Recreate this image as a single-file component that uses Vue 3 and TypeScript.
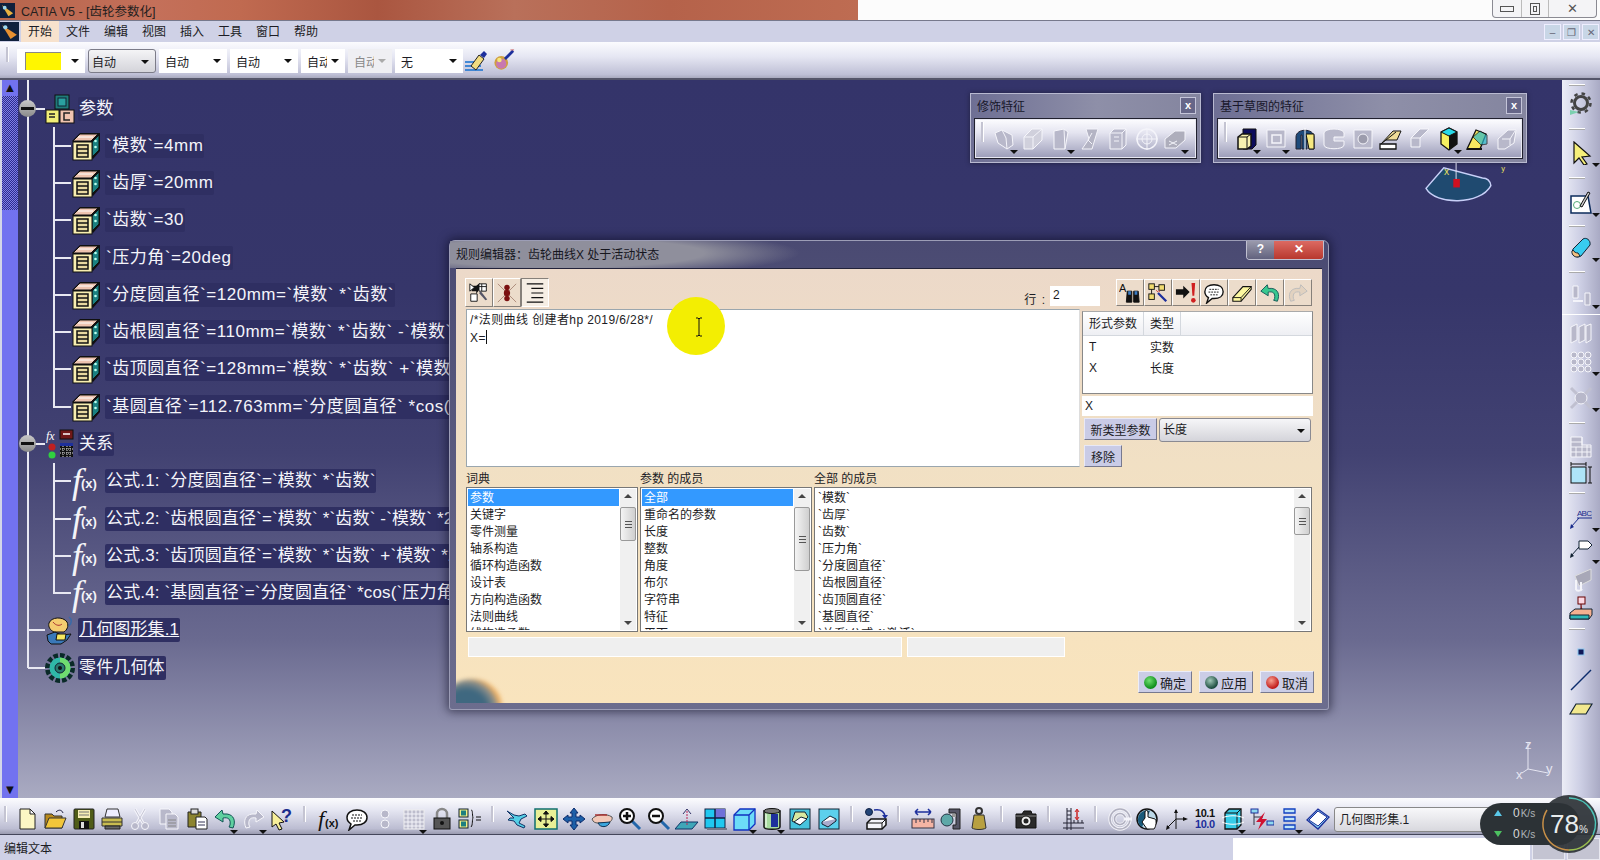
<script setup lang="ts">
const dis = 'fill="#b8b8ca" stroke="#f6f6fb"'
const disLine = 'fill="none" stroke="#f4f4fa"'

const icons: Record<string, string> = {
  new: '<path d="M5 2h10l5 5v15H5z" fill="#fcf7c4" stroke="#222"/><path d="M15 2v5h5z" fill="#fff" stroke="#222"/>',
  open: '<path d="M2 7h7l2 2h8v12H2z" fill="#b8891c" stroke="#333"/><path d="M6 11h17l-4 10H2z" fill="#f2c63a" stroke="#333"/><path d="M13 5c3-3 6-2 7 1" fill="none" stroke="#224"/>',
  save: '<rect x="2" y="2" width="20" height="20" rx="1" fill="#4f5c18" stroke="#222"/><rect x="6" y="3" width="12" height="8" fill="#f6eeb4"/><path d="M7 5h10M7 8h10" stroke="#777"/><rect x="7" y="14" width="10" height="8" fill="#111"/><rect x="9" y="15" width="3" height="6" fill="#ddd"/>',
  print: '<path d="M7 2h11l2 8H5z" fill="#eef" stroke="#333"/><path d="M2 11h20v8H2z" fill="#c8bc50" stroke="#333"/><path d="M2 15h20" stroke="#333"/><path d="M5 19h15v3H5z" fill="#666" stroke="#222"/>',
  cut: `<circle cx="7" cy="19" r="3.5" ${dis}/><circle cx="17" cy="19" r="3.5" ${dis}/><path d="M9 16 17 2M15 16 7 2" stroke="#f4f4fa" stroke-width="3"/><path d="M9 16 17 2M15 16 7 2" stroke="#c6c6d6"/>`,
  copy: `<path d="M3 2h9l3 3v12H3z" ${dis}/><path d="M9 7h9l3 3v12H9z" ${dis}/><path d="M11 13h8M11 16h8M11 19h8" stroke="#888"/>`,
  paste: '<path d="M3 5h13v15H3z" fill="#8c8430" stroke="#222"/><rect x="6" y="2" width="7" height="5" fill="#ddd" stroke="#222"/><path d="M11 10h9l2 2v10H11z" fill="#fff" stroke="#222"/><path d="M13 15h7M13 18h7" stroke="#335"/>',
  undo: '<path d="M9 3 2 10l8 5v-4c5-1 8 1 7 7l-1 2 4 1c3-7 1-13-6-14H10z" fill="#5fd0a0" stroke="#155"/>',
  redo: `<path d="M15 3l7 7-8 5v-4c-5-1-8 1-7 7l1 2-4 1C1 14 3 8 10 7h4z" ${dis}/>`,
  help: '<path d="M2 4 14 15l-5 1 3 6-3 1-3-6-4 3z" fill="#f7ef9a" stroke="#111"/><text x="11" y="15" font-size="18" font-weight="700" font-family="Liberation Sans" fill="#1a2c8c">?</text>',
  fx: '<text x="1" y="20" font-size="23" font-style="italic" font-family="Liberation Serif" fill="#111">f</text><text x="8" y="20" font-size="11" font-weight="700" font-family="Liberation Sans" fill="#111">(x)</text>',
  bubble: '<path d="M12 3c6 0 10 3 10 7.5S18 18 12 18l-2 0-6 5 2-6C3 15 2 13 2 10.500 2 6 6 3 12 3z" fill="#fff" stroke="#111" stroke-width="1.500"/><path d="M7 8h10M6 11h12M8 14h8" stroke="#111" stroke-dasharray="2 1"/>',
  link: `<circle cx="12" cy="7" r="4" ${dis}/><circle cx="12" cy="17" r="4" ${dis}/>`,
  table: '<rect x="2" y="3" width="20" height="19" fill="#bdbdcd" stroke="#eee"/><path d="M2 7h20M2 11h20M2 15h20M2 19h20M6 3v19M10 3v19M14 3v19M18 3v19" stroke="#f4f4fa"/>',
  lock: '<path d="M7 11V7a5 5 0 0 1 10 0v4" fill="none" stroke="#888" stroke-width="2.500"/><rect x="4" y="11" width="16" height="11" fill="#555" stroke="#111"/><circle cx="12" cy="16" r="2" fill="#111"/>',
  params: '<rect x="1" y="2" width="9" height="8" fill="#f2ee88" stroke="#123"/><rect x="3" y="3.500" width="5" height="5" fill="#1d7f7f"/><rect x="1" y="13" width="9" height="8" fill="#f2ee88" stroke="#123"/><rect x="3" y="14.500" width="5" height="5" fill="#1d7f7f"/><path d="M13 3c2 0 1 4 2 8-1 1 0 7-2 9" fill="none" stroke="#111"/><path d="M18 10h5M18 13h5" stroke="#111"/>',
  fly: '<path d="M2 4 9 8l5 1 6-2 2 2-6 3-2 4 6 3-1 2-7-3-3-4-6-1 2-2 4 0z" fill="#54cfe6" stroke="#136"/>',
  fit: '<rect x="1" y="2" width="22" height="20" fill="#e8ef96" stroke="#0f6f6f" stroke-width="1.500"/><path d="M12 4v16M4 12h16M12 4l-2.500 3h5zM12 20l-2.500-3h5zM4 12l3-2.500v5zM20 12l-3-2.500v5z" fill="#111" stroke="#111"/>',
  pan: '<path d="M12 1l4 5h-2v4h4V8l5 4-5 4v-2h-4v4h2l-4 5-4-5h2v-4H6v2l-5-4 5-4v2h4V6H8z" fill="#1c5fa8" stroke="#0c2c6c"/>',
  rotate: '<path d="M2 12c4-5 14-6 20-2 1 3-2 6-6 6H8c-3 0-5-1-6-4z" fill="#f2c8b8" stroke="#555"/><path d="M8 16c2 5 10 5 12-1z" fill="#3ba6dd" stroke="#135"/><path d="M5 8h12" stroke="#a33" stroke-width="1.500"/>',
  zoomin: '<path d="M14 14l8 8" stroke="#26a" stroke-width="3"/><circle cx="9" cy="9" r="7" fill="#fff" stroke="#111" stroke-width="2"/><path d="M5 9h8M9 5v8" stroke="#111" stroke-width="2.500"/>',
  zoomout: '<path d="M14 14l8 8" stroke="#26a" stroke-width="3"/><circle cx="9" cy="9" r="7" fill="#fff" stroke="#111" stroke-width="2"/><path d="M5 9h8" stroke="#111" stroke-width="2.500"/>',
  normal: '<path d="M6 15h17l-6 7H0z" fill="#3fa6b8" stroke="#136"/><path d="M12 18V3" stroke="#b25" stroke-dasharray="2 1"/><path d="M8 7l4-5 4 5" fill="none" stroke="#336"/>',
  quad: '<rect x="2" y="2" width="20" height="19" fill="#20c8f0" stroke="#124"/><rect x="12" y="2" width="10" height="9" fill="#7070d8"/><path d="M12 2v19M2 11h20" stroke="#124" stroke-width="1.500"/><path d="M4 21h20v2H4z" fill="#778"/>',
  cube: '<path d="M2 8 8 2h15v15l-6 6H2z" fill="#6cdcf8" stroke="#1030c0" stroke-width="1.300"/><path d="M2 8h15v15M17 8l6-6" fill="none" stroke="#1030c0" stroke-width="1.300"/>',
  cyl: '<path d="M4 4v16c0 3 16 3 16 0V4z" fill="#a8dca0" stroke="#111" stroke-width="1.500"/><ellipse cx="12" cy="4" rx="8" ry="2.500" fill="#777" stroke="#111"/><rect x="11" y="7" width="7" height="13" fill="#1d2f9c"/><path d="M6 7v13" stroke="#fff"/>',
  hide: '<rect x="2" y="2" width="20" height="20" fill="#48c4de" stroke="#123"/><path d="M7 5h10l3 5-8 8-8-4z" fill="#d8e8a0" stroke="#123"/><path d="M6 15l7-5 6 2-7 6z" fill="#fff" stroke="#123"/>',
  swap: '<rect x="2" y="2" width="20" height="20" fill="#5cd0ec" stroke="#123"/><path d="M5 15l8-6 6 3-8 6z" fill="#fff" stroke="#123"/><path d="M5 15v2l6 3 8-6v-2" fill="#aac" stroke="#123"/>',
  move: '<circle cx="5" cy="5" r="3.500" fill="#247" stroke="#124"/><path d="M10 3c6-1 10 1 11 6" fill="none" stroke="#1d2f9c" stroke-width="1.500"/><path d="M18 8h6l-3 4z" fill="#1d2f9c"/><path d="M3 16l4-4h15v6l-4 4H3z" fill="#f4f4fa" stroke="#111" stroke-width="1.500"/><path d="M3 16h15v6M18 16l4-4" fill="none" stroke="#111"/>',
  ruler: '<path d="M4 5h16M4 5l3-3M4 5l3 3M20 5l-3-3M20 5l-3 3" fill="none" stroke="#1d2f9c" stroke-width="1.500"/><rect x="1" y="12" width="22" height="9" fill="#f4b4a4" stroke="#334"/><path d="M5 12v4M9 12v3M13 12v4M17 12v3M21 12v4" stroke="#334"/>',
  clamp: '<path d="M10 2h11v20h-7v-4h3V6h-7z" fill="#556" stroke="#222"/><path d="M13 7h4v3h-4z" fill="#999"/><circle cx="8" cy="13" r="6" fill="#5ea8a8" stroke="#234"/>',
  weight: '<circle cx="12" cy="4" r="3" fill="none" stroke="#333" stroke-width="2"/><path d="M7 8h10l2 13c-3 2-11 2-14 0z" fill="#b8a040" stroke="#333"/>',
  camera: '<path d="M2 7h6l2-3h7l1 3h4v14H2z" fill="#2a2a2a" stroke="#111"/><path d="M2 9h20" stroke="#888"/><circle cx="12" cy="14" r="5" fill="#eee" stroke="#111"/><circle cx="12" cy="14" r="2.500" fill="#222"/>',
  analysis: '<path d="M6 1v22M10 1v22M2 16h21M2 21h21" stroke="#223" fill="none"/><path d="M6 4h4M6 8h4M6 12h4M13 16v-3M17 16v-3M21 16v-3" stroke="#223"/><path d="M16 3v9" stroke="#c22" stroke-width="1.500"/><path d="M14 5l2-3 2 3M14 10l2 3 2-3" fill="none" stroke="#c22"/>',
  spiral: '<circle cx="12" cy="12" r="10" fill="none" stroke="#f0f0f6" stroke-width="3.500"/><circle cx="12" cy="12" r="10" fill="none" stroke="#b0b0c0" stroke-width="1.500"/><circle cx="12" cy="12" r="5.500" fill="none" stroke="#f0f0f6" stroke-width="3.500"/><circle cx="12" cy="12" r="5.500" fill="none" stroke="#b0b0c0" stroke-width="1.500"/><path d="M16 12h8" stroke="#f4f4fa" stroke-width="3"/>',
  hand: '<circle cx="11" cy="12" r="10" fill="#bcd8e8" stroke="#111" stroke-width="1.500"/><path d="M2 12a9 9 0 0 1 12-8l-4 8-4 8a9 9 0 0 1-4-8z" fill="#1a5a7a"/><path d="M9 11V5a1.500 1.500 0 0 1 3 0v5l7 2c2 1 1 8-1 10h-7l-5-7z" fill="#fff" stroke="#111"/>',
  axes: '<path d="M11 22V12l10 0" fill="none" stroke="#111"/><path d="M11 12V3M11 12 2 21M21 12" stroke="#111"/><path d="M9 6l2-4 2 4zM18 10l5 2-5 2zM1 23l1-5 3 3z" fill="#111"/>',
  num: '<text x="2" y="10" font-size="11" font-weight="700" font-family="Liberation Sans" fill="#111" textLength="20">10.1</text><text x="2" y="21" font-size="11" font-weight="700" font-family="Liberation Sans" fill="#1d2f9c" textLength="20">10.0</text>',
  cuberot: '<path d="M4 6 8 2h12v16l-4 4H4z" fill="#38cce8" stroke="#111" stroke-width="1.300"/><path d="M4 6h12v16M16 6l4-4" fill="none" stroke="#111"/><path d="M1 11c6-3 16-3 22 0M1 15c6 3 16 3 22 0" fill="none" stroke="#fff"/>',
  bolt: '<rect x="1" y="2" width="7" height="4" fill="#8fd8f0" stroke="#1d2f9c"/><path d="M4 6v12M4 10h9" stroke="#334"/><rect x="17" y="14" width="7" height="4" fill="#8fd8f0" stroke="#1d2f9c"/><path d="M15 5 6 15h5l-3 8 9-11h-5z" fill="#d01030"/>',
  tree: '<path d="M6 2h11v4H6zM6 10h11v4H6zM6 18h11v4H6z" fill="#bfe4f8" stroke="#1040c0" stroke-width="1.300"/>',
  book: '<path d="M1 13 12 2l11 8-11 12z" fill="#8cd4f0" stroke="#1d2f9c" stroke-width="1.300"/><path d="M3 13 12 4l9 6-9 9z" fill="#fff" stroke="#1d2f9c"/>',
  gear: '<circle cx="12" cy="11" r="6.500" fill="none" stroke="#444" stroke-width="3"/><circle cx="12" cy="11" r="9.500" fill="none" stroke="#444" stroke-width="2.500" stroke-dasharray="3.500 4"/><path d="M1 18v5l9-3z" fill="#7cd0b0"/>',
  arrow: '<path d="M5 1 21 15l-8 1 5 7-3 1-5-7-5 5z" fill="#f6f07a" stroke="#111" stroke-width="1.200"/>',
  sketch: '<path d="M2 5h17l3 17H2z" fill="#fff" stroke="#0c2c5c" stroke-width="1.500"/><circle cx="8" cy="14" r="3.500" fill="none" stroke="#5a7"/><path d="M11 15 19 1l2 1-8 14z" fill="#ccc" stroke="#111"/>',
  pad: '<path d="M4 13 14 3c3-2 8 1 7 6L12 20c-5 3-10-2-8-7z" fill="#38ccf0" stroke="#123"/><path d="M3 15c-1 4 4 8 8 5l-2-3c-2 0-4-1-5-3z" fill="#f4c080" stroke="#123"/>',
  dim1: `<path d="M4 3h5v12H4zM16 10h5v12h-5z" ${dis}/><path d="M4 18h10" stroke="#f4f4fa" stroke-width="2"/>`,
  dim2: `<path d="M2 6l6-3v16l-6 3zM10 6l6-3v16l-6 3zM17 5l5-2v16l-5 3z" ${dis}/>`,
  dim3: `<g ${dis}><circle cx="5" cy="5" r="3"/><circle cx="12" cy="5" r="3"/><circle cx="19" cy="5" r="3"/><circle cx="5" cy="12" r="3"/><circle cx="12" cy="12" r="3"/><circle cx="19" cy="12" r="3"/><circle cx="5" cy="19" r="3"/><circle cx="12" cy="19" r="3"/><circle cx="19" cy="19" r="3"/></g>`,
  dim4: `<circle cx="12" cy="12" r="6" ${dis}/><path d="M2 2l6 6M22 2l-6 6M2 22l6-6M22 22l-6-6" stroke="#c0c0d0" stroke-width="3"/>`,
  dim5: `<path d="M2 2v20h20V10h-9V2z" ${dis}/><path d="M2 7h11M2 12h20M2 17h20M7 12v10M13 2v20M18 10v12" stroke="#f4f4fa"/>`,
  frame: '<rect x="2" y="6" width="15" height="16" fill="#aee4f8" stroke="#111"/><path d="M2 1v4M17 1v4M2 3h15M21 6v16M19 6h4M19 22h4" stroke="#111"/>',
  abc: '<text x="8" y="10" font-size="8" font-family="Liberation Sans" fill="#1a2c8c" textLength="15">ABC</text><path d="M8 12h15M10 12l-8 9" stroke="#1a2c8c"/><path d="M1 23l1-5 3 3z" fill="#1a2c8c"/>',
  tag: '<path d="M10 4h9l4 4-4 4h-9z" fill="#fff" stroke="#123"/><path d="M10 10l-8 9" stroke="#123"/><path d="M1 21l1-5 3 3z" fill="#123"/>',
  flag: `<path d="M6 8l16-7v11L10 18z" fill="#a8a8b8" stroke="#ddd"/><path d="M7 12v10M12 14v8" stroke="#f4f4fa" stroke-width="2"/><path d="M7 22c2 1 5 1 6-1" ${disLine} stroke-width="2"/>`,
  stamp: '<rect x="9" y="1" width="7" height="7" fill="#fcd8e4" stroke="#600"/><path d="M12 8v5l-5 3h11l-5-3" fill="#b02020" stroke="#600"/><path d="M1 17 6 13h17v6l-3 4H1z" fill="#f4b090" stroke="#123"/><path d="M1 19h19v4H1z" fill="#2fb8b8" stroke="#123"/>',
  point: '<rect x="9" y="9" width="6" height="6" fill="#101858" stroke="#8cc8f0"/>',
  line: '<path d="M2 22 22 2" stroke="#0c2c6c" stroke-width="1.500"/>',
  plane: '<path d="M7 7h16l-6 10H1z" fill="#f2e88e" stroke="#123" stroke-width="1.200"/>',
  brush: '<path d="M1 13h14M1 17h16M1 21h18" stroke="#1470d0" stroke-width="1.500"/><path d="M7 17 15 6l5 4-8 11z" fill="#f2dc80" stroke="#222"/><path d="M16 6l4-4 3 3-3 4z" fill="#1d2f9c"/>',
  ball: '<circle cx="9" cy="15" r="7.500" fill="#d0a040"/><circle cx="9" cy="16" r="5.500" fill="#c878b0"/><circle cx="7" cy="12" r="2.500" fill="#f6e87a"/><path d="M13 11 22 2" stroke="#1d2f9c" stroke-width="3"/><path d="M19 1l4 0" stroke="#c66"/>',
  fillet: `<path d="M3 6l7-3 10 5 1 10-6 4-9-6z" ${dis}/><path d="M10 3l4 8 1 11" ${disLine}/>`,
  chamfer: `<path d="M3 10l8-8h10v11l-9 9H3z" fill="#d0d0dc" stroke="#f6f6fb"/><path d="M3 10h9v12M12 10l9-8" ${disLine}/>`,
  draft: `<path d="M5 4l10-2 4 3-3 17H5z" ${dis}/><path d="M15 2l1 20" ${disLine}/>`,
  shell: `<path d="M8 2h12l-6 20H4l7-10z" fill="#b4b4c4" stroke="#f4f4fa"/><path d="M14 6l-4 7 4 4" ${disLine}/>`,
  thick: `<path d="M4 6 8 2h12v16l-4 4H4z" ${dis}/><path d="M4 6h12v16M16 6l4-4M8 10h5M8 14h5" ${disLine}/>`,
  thread: `<circle cx="12" cy="12" r="10" ${disLine} stroke-width="1.500"/><circle cx="12" cy="12" r="5" ${disLine}/><path d="M12 1v22M1 12h22" ${disLine}/>`,
  remove: `<path d="M2 12 12 4h10v9l-9 8H2z" fill="#aeaebc" stroke="#f4f4fa"/><path d="M6 14l8 4M14 14l-8 4" ${disLine}/>`,
  padS: '<path d="M8 2h13v16l-4 4H8z" fill="#0c0c5c" stroke="#111"/><path d="M3 10l4-3h9v12l-4 3H3z" fill="#f6f0b0" stroke="#111" stroke-width="1.500"/><path d="M3 10h9v12M12 10l4-3" fill="none" stroke="#111"/>',
  pocket: `<path d="M3 3h18v17H3z" ${dis}/><path d="M8 8h9v8H8z" ${disLine} stroke-width="1.500"/>`,
  shaft: '<path d="M3 10c0-9 18-9 18 0v12h-5V8h-2v14H9V8H8v14H3z" fill="#1d4a7a" stroke="#223"/><path d="M13 7h8v15h-5z" fill="#f6e880" stroke="#111"/><path d="M12 1v22" stroke="#fff"/>',
  groove: `<ellipse cx="12" cy="6" rx="10" ry="4" ${dis}/><path d="M2 6v12c0 5 20 5 20 0v-4H12V10h10V6" ${dis}/>`,
  hole: `<path d="M3 3h18v18H3z" ${dis}/><circle cx="12" cy="12" r="5" fill="#9c9cac" stroke="#f4f4fa"/>`,
  rib: '<path d="M2 17 14 4h8l-4 9H7z" fill="#eedc98" stroke="#111"/><path d="M1 17h16v5H1z" fill="#fff" stroke="#111" stroke-width="1.300"/><path d="M7 13 17 5" stroke="#111"/>',
  slot: `<path d="M3 20V11l9-9h9L12 11v9zM3 11h9" ${dis}/>`,
  stiff: '<path d="M4 5 12 1l8 4v12l-8 6-8-6z" fill="#f6f060" stroke="#111" stroke-width="1.300"/><path d="M4 5l8 4 8-4-8-4z" fill="#28d8e8" stroke="#111"/><path d="M12 9v14l8-6V5z" fill="#111"/>',
  multi: '<path d="M1 22 10 3l10 4-6 15z" fill="#f6e860" stroke="#111" stroke-width="1.300"/><path d="M7 10l7-6 7 4v9l-6 1z" fill="#28b8c8" stroke="#111" opacity=".7"/><path d="M1 22h15" stroke="#111" stroke-width="2"/>',
  solid: `<path d="M3 12 13 3h8l-2 13-9 6H3z" ${dis}/><path d="M7 12h8v6M15 12l5-8" ${disLine}/>`,
  formula: '<path d="M4 4h5l4-3v3h2l-6 9v-3H4z" fill="#111"/><path d="M2 2l5 4-5 4zM3 13h7v8H3z" fill="#fff" stroke="#111"/><path d="M12 2h8v8h-8zM12 5h8M15 2v8" fill="#fff" stroke="#111"/><path d="M14 10l7 9-2 1-7-8z" fill="#556"/>',
  debug: '<path d="M2 2l20 20M22 2 2 22" stroke="#a87" /><circle cx="12" cy="6" r="3" fill="#7a1010"/><circle cx="12" cy="12" r="3.500" fill="#7a1010"/><circle cx="12" cy="18" r="3" fill="#7a1010"/>',
  indent: '<path d="M3 2h18M8 7h13M8 12h13M8 17h13M3 22h18" stroke="#111" stroke-width="1.300"/>',
  find: '<text x="0" y="11" font-size="12" font-family="Liberation Sans" fill="#111">A</text><path d="M9 10h5v12H8zM16 10h5l1 12h-6z" fill="#111" stroke="#111"/><path d="M10 10h3v4h-3zM17 10h3v4h-3z" fill="#3a7ac0"/>',
  wizard: '<rect x="2" y="2" width="6" height="6" fill="#f2dc70" stroke="#111"/><rect x="13" y="3" width="6" height="6" fill="#f2dc70" stroke="#111"/><rect x="2" y="13" width="6" height="6" fill="#f2dc70" stroke="#111"/><path d="M8 5h5M5 8v5" stroke="#111"/><path d="M12 12l9 9" stroke="#1d2f9c" stroke-width="2.500"/><path d="M10 9l2 2M14 9l-1 2" stroke="#c33"/>',
  errArrow: '<path d="M1 8h8V4l7 7-7 7v-4H1z" fill="#111"/><path d="M18 1h4l-1 14h-2z" fill="#d02020"/><circle cx="20" cy="20" r="2.500" fill="#d02020"/>',
  eraser: '<path d="M2 17 13 5h9v3L11 21H2z" fill="#fcf7a0" stroke="#111" stroke-width="1.200"/><path d="M2 17h9v4M11 17 22 5" fill="none" stroke="#111"/>',
  undoG: '<path d="M9 3 2 10l8 5v-4c5-1 8 1 7 7l-1 2 4 1c3-7 1-13-6-14H10z" fill="#38c890" stroke="#155"/>',
  redoD: `<path d="M15 3l7 7-8 5v-4c-5-1-8 1-7 7l1 2-4 1C1 14 3 8 10 7h4z" fill="#e2d2c0" stroke="#bbb"/>`
}

const treeIcons: Record<string, string> = {
  group: '<rect x="10" y="1" width="14" height="14" fill="#1f7a7a" stroke="#111"/><rect x="13" y="4" width="8" height="8" fill="#2aa0a0" stroke="#123"/><rect x="1" y="16" width="13" height="13" fill="#f2ee78" stroke="#111"/><path d="M4 20h6M4 23h6" stroke="#222" stroke-width="1.500"/><rect x="15" y="16" width="14" height="13" fill="#f0c4b0" stroke="#111"/><path d="M25 19h-6v7h6" fill="none" stroke="#222" stroke-width="1.500"/>',
  param: '<path d="M1 10 9 2h20v18l-7 8z" fill="#111"/><path d="M2 10 9 3h18l-7 7z" fill="#eec4b0" stroke="#111"/><path d="M7 6h15" stroke="#fff"/><path d="M21 11l7-7v15l-7 7z" fill="#1a8080" stroke="#111"/><circle cx="24.500" cy="10" r="1.300" fill="#bfe"/><circle cx="24.500" cy="16" r="1.300" fill="#bfe"/><rect x="2" y="11" width="19" height="18" fill="#f8eeb0" stroke="#111"/><rect x="6" y="14" width="11" height="12" fill="#e8d8a0" stroke="#111" stroke-width="1.500"/><path d="M6 18h11M6 22h11" stroke="#111" stroke-width="1.500"/>',
  rel: '<text x="1" y="11" font-size="12" font-style="italic" font-family="Liberation Serif" fill="#fff">fx</text><rect x="15" y="1" width="13" height="9" fill="#701818" stroke="#111"/><path d="M18 5h7" stroke="#fff" stroke-width="1.500"/><circle cx="7" cy="18" r="3.500" fill="#c02020"/><circle cx="7" cy="26" r="3.500" fill="#30d040"/><rect x="15" y="14" width="13" height="14" fill="#111"/><rect x="15" y="14" width="13" height="3" fill="#1d2f9c"/><path d="M18 17v11M22 17v11M25 17v11M15 20h13M15 24h13" stroke="#ddd" stroke-dasharray="1 1"/>',
  geom: '<path d="M4 8c2-6 14-7 18-1 2 4 0 8-3 10H9C5 15 3 12 4 8z" fill="#f4cc70" stroke="#111"/><path d="M8 7c3 4 7 4 9 2" fill="none" stroke="#a33"/><path d="M24 2c3 2 3 6 0 9" fill="none" stroke="#3a6aa8" stroke-width="1.500"/><path d="M2 20l8-3 6 3 10-1-4 6-6 4H6l-3-3z" fill="#3a78b8" stroke="#111"/><path d="M12 19h9l-1 6h-9z" fill="#f6e860" stroke="#111"/>',
  body: '<circle cx="15" cy="15" r="12.500" fill="none" stroke="#0a2a28" stroke-width="5" stroke-dasharray="4.500 2"/><circle cx="15" cy="15" r="10.500" fill="#2fb8a8"/><path d="M15 4.500a10.500 10.500 0 0 1 0 21z" fill="#70dc70"/><circle cx="15" cy="15" r="5" fill="#2a7a70" stroke="#123"/><circle cx="15" cy="15" r="2" fill="#111"/>'
}

interface Tool {
  name: string
  drop: boolean
  grip: boolean
}

function parseTools(list: string): Tool[] {
  return list.split(' ').map((t) => ({
    name: t.replace('+', ''),
    drop: t.endsWith('+'),
    grip: t === '|'
  }))
}

const bottomTools = parseTools(
  '| new open save print cut copy paste undo+ redo+ help | fx bubble link table+ lock params | fly fit pan rotate zoomin zoomout normal quad cube+ cyl+ hide swap | move | ruler clamp weight | camera | analysis | spiral hand axes num cuberot+ bolt tree+ book'
)
const decorTools = parseTools('fillet+ chamfer draft+ shell thick thread remove+')
const sketchTools = parseTools('padS+ pocket+ shaft groove hole rib slot stiff+ multi solid')
const dialogLeft = ['formula', 'debug', 'indent']
const dialogRight = ['find', 'wizard', 'errArrow', 'bubble', 'eraser', 'undoG', 'redoD']

// item height keeps each icon on the same row as the reference strip
const sideTools = [
  { name: '|', h: 9 }, { name: 'gear', h: 30 }, { name: '|', h: 19 }, { name: 'arrow', h: 30, drop: true },
  { name: '|', h: 20 }, { name: 'sketch', h: 30, drop: true }, { name: '|', h: 15 }, { name: 'pad', h: 30, drop: true },
  { name: '|', h: 17 }, { name: 'dim1', h: 30, drop: true }, { name: 'sep', h: 8 }, { name: 'dim2', h: 29 },
  { name: 'dim3', h: 30, drop: true }, { name: 'gap', h: 6 }, { name: 'dim4', h: 30, drop: true }, { name: '|', h: 19 },
  { name: 'dim5', h: 30 }, { name: 'frame', h: 22 }, { name: '|', h: 18 }, { name: 'abc', h: 31, drop: true },
  { name: 'tag', h: 32, drop: true }, { name: 'flag', h: 30 }, { name: 'stamp', h: 26 }, { name: '|', h: 16 },
  { name: 'point', h: 30 }, { name: 'line', h: 26 }, { name: 'plane', h: 32 }
]

const menus = ['开始', '文件', '编辑', '视图', '插入', '工具', '窗口', '帮助']
const combos = [
  { cls: 'w68', swatch: true, text: '' },
  { cls: 'w68 raised', text: '自动' },
  { cls: 'w68', text: '自动' },
  { cls: 'w68', text: '自动' },
  { cls: 'w44', text: '自动' },
  { cls: 'w44 off', text: '自动' },
  { cls: 'w68', text: '无' }
]

const treeRows = [
  { icon: 'group', text: '参数', top: true, plus: true },
  { icon: 'param', text: '`模数`=4mm' },
  { icon: 'param', text: '`齿厚`=20mm' },
  { icon: 'param', text: '`齿数`=30' },
  { icon: 'param', text: '`压力角`=20deg' },
  { icon: 'param', text: '`分度圆直径`=120mm=`模数` *`齿数`' },
  { icon: 'param', text: '`齿根圆直径`=110mm=`模数` *`齿数` -`模数` *2.5' },
  { icon: 'param', text: '`齿顶圆直径`=128mm=`模数` *`齿数` +`模数` *2' },
  { icon: 'param', text: '`基圆直径`=112.763mm=`分度圆直径` *cos(`压力角`)', last: true },
  { icon: 'rel', text: '关系', top: true, plus: true },
  { icon: 'fx', text: '公式.1: `分度圆直径`=`模数` *`齿数`' },
  { icon: 'fx', text: '公式.2: `齿根圆直径`=`模数` *`齿数` -`模数` *2.5' },
  { icon: 'fx', text: '公式.3: `齿顶圆直径`=`模数` *`齿数` +`模数` *2' },
  { icon: 'fx', text: '公式.4: `基圆直径`=`分度圆直径` *cos(`压力角`)', last: true },
  { icon: 'geom', text: '几何图形集.1', top: true, active: true },
  { icon: 'body', text: '零件几何体', top: true, end: true }
]

const lists = [
  { title: '词典', thumb: 34, rows: ['参数', '关键字', '零件测量', '轴系构造', '循环构造函数', '设计表', '方向构造函数', '法则曲线', '线构造函数'], pick: true },
  { title: '参数 的成员', thumb: 64, rows: ['全部', '重命名的参数', '长度', '整数', '角度', '布尔', '字符串', '特征', '平面'], pick: true },
  { title: '全部 的成员', thumb: 28, rows: ['`模数`', '`齿厚`', '`齿数`', '`压力角`', '`分度圆直径`', '`齿根圆直径`', '`齿顶圆直径`', '`基圆直径`', '`关系\\公式.1\\激活`'], pick: false }
]

const actions = [
  { text: '确定', dot: 'green' },
  { text: '应用', dot: 'teal' },
  { text: '取消', dot: 'red' }
]
</script>

<template>
  <div class="app">
    <header class="titlebar">
      <div class="title-glow">
        <svg class="app-logo" viewBox="0 0 16 16"><rect width="16" height="16" fill="#10203c" /><path d="M2 2 14 11 9 14z" fill="#e8b040" /><circle cx="5" cy="5" r="2" fill="#9cd8f0" /></svg>
        <span>CATIA V5 - [齿轮参数化]</span>
      </div>
      <div class="win-btns">
        <span class="win-btn min"><i></i></span>
        <span class="win-btn max"><i></i></span>
        <span class="win-btn close">✕</span>
      </div>
    </header>

    <nav class="menubar">
      <svg class="menu-logo" viewBox="0 0 18 18"><rect width="18" height="18" fill="#10203c" /><path d="M2 3 16 12 10 16z" fill="#e89030" /><circle cx="5" cy="5" r="2" fill="#9cd8f0" /></svg>
      <span v-for="(m, i) in menus" :key="m" class="menu-item" :class="{ on: i === 0 }">{{ m }}</span>
      <div class="mdi-btns">
        <span>–</span>
        <span>❐</span>
        <span>✕</span>
      </div>
    </nav>

    <div class="format-bar">
      <i class="grip-v"></i>
      <div v-for="(c, i) in combos" :key="i" class="combo" :class="c.cls">
        <i v-if="c.swatch" class="swatch"></i>
        <span v-else class="combo-text">{{ c.text }}</span>
        <i class="caret"></i>
      </div>
      <svg class="fmt-icon" viewBox="0 0 24 24" v-html="icons.brush"></svg>
      <svg class="fmt-icon ball" viewBox="0 0 24 24" v-html="icons.ball"></svg>
    </div>

    <main class="main">
      <aside class="tree-scroll">
        <span class="scroll-btn">▲</span>
        <i class="scroll-hatch"></i>
        <i class="scroll-fill"></i>
        <span class="scroll-btn">▼</span>
      </aside>

      <section class="canvas">
        <div class="tree">
          <div v-for="row in treeRows" :key="row.text" class="row" :class="{ top: row.top, end: row.end }">
            <i v-if="row.plus" class="collapse"></i>
            <i v-if="!row.top" class="link" :class="{ last: row.last }"></i>
            <i v-if="row.top" class="stub"></i>
            <svg v-if="row.icon !== 'fx'" class="tree-icon" viewBox="0 0 30 30" v-html="treeIcons[row.icon]"></svg>
            <span v-else class="fx-icon"><b>f</b><em>(x)</em></span>
            <span class="label" :class="{ active: row.active, spaced: row.icon === 'param' }">{{ row.text }}</span>
          </div>
        </div>
      </section>

      <aside class="side-tools">
        <template v-for="(t, i) in sideTools" :key="i">
          <div class="side-slot" :style="{ height: t.h + 'px' }">
            <i v-if="t.name === '|'" class="grip-h"></i>
            <i v-else-if="t.name === 'sep'" class="side-sep"></i>
            <template v-else-if="t.name !== 'gap'">
              <svg class="side-icon" viewBox="0 0 24 24" v-html="icons[t.name]"></svg>
              <i v-if="t.drop" class="mini-caret"></i>
            </template>
          </div>
        </template>
      </aside>
    </main>

    <div class="bottom-bar">
      <template v-for="(t, i) in bottomTools" :key="i">
        <i v-if="t.grip" class="grip-slot"></i>
        <div v-else class="tool">
          <svg viewBox="0 0 24 24" v-html="icons[t.name]"></svg>
          <i v-if="t.drop" class="mini-caret"></i>
        </div>
      </template>
      <div class="scope-box">几何图形集.1</div>
    </div>

    <footer class="statusbar">
      <span>编辑文本</span>
      <div class="status-right">
        <div class="cmd-box"></div>
        <i class="tray"></i>
        <i class="tray"></i>
      </div>
    </footer>

    <!-- floating windows -->
    <div class="floater decor">
      <div class="floater-title"><span>修饰特征</span><b>x</b></div>
      <div class="floater-body">
        <i class="grip-v small"></i>
        <div v-for="t in decorTools" :key="t.name" class="tool">
          <svg viewBox="0 0 24 24" v-html="icons[t.name]"></svg>
          <i v-if="t.drop" class="mini-caret"></i>
        </div>
      </div>
    </div>

    <div class="floater sketchbased">
      <div class="floater-title"><span>基于草图的特征</span><b>x</b></div>
      <div class="floater-body">
        <i class="grip-v small"></i>
        <div v-for="t in sketchTools" :key="t.name" class="tool">
          <svg viewBox="0 0 24 24" v-html="icons[t.name]"></svg>
          <i v-if="t.drop" class="mini-caret"></i>
        </div>
      </div>
    </div>

    <svg class="compass" viewBox="0 0 96 50">
      <path d="M25 5 6 27c10 18 58 18 69-3-1-6-5-8-9-8z" fill="#1f4a70" stroke="#c8d0f8" stroke-width="1.500" />
      <path d="M38 0v20" stroke="#e4e4f4" />
      <rect x="35" y="17" width="7" height="9" fill="#d01020" />
      <text x="25" y="13" font-size="11" fill="#e8e060" font-family="Liberation Sans">x</text>
      <text x="86" y="8" font-size="8" fill="#e8e060" font-family="Liberation Sans">y</text>
    </svg>

    <svg class="axis" viewBox="0 0 44 44">
      <path d="M13 32V6M13 32l20 4M13 32l-6 4" fill="none" stroke="#e6e6f2" />
      <text x="10" y="12" font-size="13" fill="#e6e6f2" font-family="Liberation Sans">z</text>
      <text x="31" y="36" font-size="13" fill="#e6e6f2" font-family="Liberation Sans">y</text>
      <text x="1" y="42" font-size="13" fill="#e6e6f2" font-family="Liberation Sans">x</text>
    </svg>

    <div class="dialog">
      <div class="dialog-title">
        <span>规则编辑器：齿轮曲线X 处于活动状态</span>
        <div class="dialog-btns">
          <span class="help">?</span>
          <span class="shut">✕</span>
        </div>
      </div>
      <div class="dialog-body">
        <div class="dlg-toolbar">
          <button v-for="(b, i) in dialogLeft" :key="b" class="icon-btn" :class="{ pressed: i === 2 }">
            <svg viewBox="0 0 24 24" v-html="icons[b]"></svg>
          </button>
          <span class="line-label">行 :</span>
          <span class="line-input">2</span>
          <div class="right-btns">
            <button v-for="b in dialogRight" :key="b" class="icon-btn thin">
              <svg viewBox="0 0 24 24" v-html="icons[b]"></svg>
            </button>
          </div>
        </div>

        <div class="edit-grid">
          <div class="editor">
            <div>/*法则曲线 创建者hp 2019/6/28*/</div>
            <div class="second">X=<i class="caret-line"></i></div>
          </div>
          <div class="formal">
            <div class="formal-table">
              <div class="formal-head"><span class="c1">形式参数</span><span class="c2">类型</span></div>
              <div class="formal-row"><span class="c1">T</span><span class="c2">实数</span></div>
              <div class="formal-row"><span class="c1">X</span><span class="c2">长度</span></div>
            </div>
            <div class="formal-input">X</div>
            <div class="formal-actions">
              <button class="flat-btn new-type">新类型参数</button>
              <div class="type-select">长度<i class="caret"></i></div>
            </div>
            <button class="flat-btn del">移除</button>
          </div>
        </div>

        <div class="browser">
          <div v-for="l in lists" :key="l.title" class="browser-col">
            <div class="browser-title">{{ l.title }}</div>
            <div class="listbox">
              <div class="list-rows">
                <div v-for="(r, i) in l.rows" :key="r" class="list-row" :class="{ sel: l.pick && i === 0 }">{{ r }}</div>
              </div>
              <div class="vscroll">
                <i class="up"></i>
                <div class="thumb" :style="{ height: l.thumb + 'px' }"><b></b></div>
                <i class="down"></i>
              </div>
            </div>
          </div>
        </div>

        <div class="msg-fields">
          <div class="msg wide"></div>
          <div class="msg narrow"></div>
        </div>

        <div class="actions">
          <button v-for="a in actions" :key="a.text" class="action">
            <i class="dot" :class="a.dot"></i>{{ a.text }}
          </button>
        </div>
        <i class="planet"></i>
      </div>
    </div>

    <div class="spot"></div>
    <svg class="ibeam" viewBox="0 0 10 20"><path d="M2 1h2l1 1 1-1h2M5 2v16M2 19h2l1-1 1 1h2" fill="none" stroke="#111" /></svg>

    <div class="netmon">
      <div class="net-rates">
        <div><i class="net-up"></i><b>0</b><small>K/s</small></div>
        <div><i class="net-down"></i><b>0</b><small>K/s</small></div>
      </div>
      <div class="net-gauge">
        <svg viewBox="0 0 60 60">
          <circle cx="30" cy="30" r="29" fill="#2c3236" fill-opacity=".92" />
          <path d="M30 4a26 26 0 0 1 24 37" fill="none" stroke="#4cc4b8" stroke-width="1.500" />
          <path d="M54 41a26 26 0 0 1-24 15" fill="none" stroke="#9cc050" stroke-width="1.500" />
          <path d="M30 56A26 26 0 0 1 8 16" fill="none" stroke="#c89048" stroke-width="1.500" />
        </svg>
        <span class="net-value">78<small>%</small></span>
      </div>
    </div>
  </div>
</template>

<style scoped>
.app {
  position: relative;
  width: 1600px;
  height: 860px;
  overflow: hidden;
  display: flex;
  flex-direction: column;
  font-family: "Liberation Sans", "Noto Sans CJK SC", sans-serif;
  font-size: 12px;
  color: #1c1c24;
  background: #cfd1e6;
}

i {
  display: block;
  font-style: normal;
}

button {
  font: inherit;
  color: inherit;
  padding: 0;
}

/* title + menu */
.titlebar {
  height: 21px;
  display: flex;
  justify-content: space-between;
  background: #fcfcfc;
  border-bottom: 1px solid #77798c;
  box-sizing: border-box;
}

.title-glow {
  width: 858px;
  display: flex;
  align-items: center;
  gap: 6px;
  font-size: 12.5px;
  color: #24201e;
  background: linear-gradient(90deg, #b7654c 0, #c4705a 18%, #c06a50 28%, #aa5640 44%, #b9705a 60%, #b5624a 78%, #be6c52 100%);
}

.app-logo {
  width: 15px;
  height: 15px;
}

.win-btns {
  display: flex;
  height: 17px;
  margin-right: 3px;
  border: 1px solid #8a8a92;
  border-top: 0;
  border-radius: 0 0 4px 4px;
  background: #f4f4f6;
}

.win-btn {
  display: flex;
  align-items: center;
  justify-content: center;
  color: #555;
  border-right: 1px solid #bbb;
}

.win-btn.min { width: 28px; }
.win-btn.max { width: 26px; }
.win-btn.close { width: 47px; border: 0; font-size: 13px; }
.win-btn.min i { width: 12px; height: 4px; border: 1px solid #555; }
.win-btn.max i { width: 8px; height: 10px; border: 1px solid #555; box-shadow: inset 0 0 0 2px #f4f4f6, inset 0 0 0 3px #555; }

.menubar {
  height: 21px;
  display: flex;
  align-items: center;
  background: #cfd1e6;
  font-size: 12px;
}

.menu-logo {
  width: 19px;
  height: 21px;
  flex: none;
}

.menu-item {
  width: 38px;
  height: 21px;
  line-height: 22px;
  text-align: center;
  position: relative;
  left: 2px;
}

.menu-item.on {
  background: #f7e2cd;
}

.mdi-btns {
  margin-left: auto;
  margin-right: 1px;
  display: flex;
  gap: 2px;
}

.mdi-btns span {
  width: 17px;
  height: 16px;
  line-height: 16px;
  text-align: center;
  font-size: 10px;
  color: #667;
  background: #c8d6e6;
  border: 1px solid #eef;
  box-sizing: border-box;
}

.format-bar {
  height: 38px;
  box-sizing: border-box;
  padding-top: 7px;
  display: flex;
  align-items: flex-start;
  background: linear-gradient(#fbfbfe 0, #e6e7f3 40%, #bfc0d6 90%, #a9aabe 100%);
  border-bottom: 2px solid #55566a;
}

.grip-v {
  width: 2px;
  height: 15px;
  margin: -2px 8px 0 6px;
  background: #c4c4d2;
  border-right: 1px solid #fff;
}

.combo {
  position: relative;
  height: 24px;
  margin-right: 3px;
  background: #fff;
  display: flex;
  align-items: center;
  padding-left: 6px;
  box-sizing: border-box;
  overflow: hidden;
}

.combo.w68 { width: 68px; }
.combo.w44 { width: 44px; }
.combo.off { background: #efeff3; color: #888; }
.combo.raised {
  padding-left: 3px;
  border: 1px solid #7c7c88;
  border-radius: 3px;
  background: linear-gradient(#f4f4f6, #d4d4da);
}

.combo-text {
  display: block;
  width: 100%;
  max-width: 20px;
  overflow: hidden;
  white-space: nowrap;
}

.combo.w68 .combo-text {
  max-width: 40px;
}

.swatch {
  width: 36px;
  height: 18px;
  margin-left: 2px;
  background: #fff600;
  border-left: 1px solid #888;
  border-top: 1px solid #888;
  box-sizing: border-box;
}

.caret {
  position: absolute;
  right: 6px;
  top: 10px;
  width: 0;
  height: 0;
  border: 4px solid transparent;
  border-bottom: 0;
  border-top-color: #111;
}

.combo.off .caret {
  border-top-color: #aaa;
}

.fmt-icon {
  width: 24px;
  height: 24px;
  margin-left: -2px;
}

.fmt-icon.ball {
  width: 22px;
  height: 22px;
  margin-left: 5px;
}

/* canvas + tree */
.main {
  flex: 1;
  min-height: 0;
  display: flex;
}

.tree-scroll {
  width: 18px;
  flex: none;
  box-sizing: border-box;
  padding-left: 2px;
  display: flex;
  flex-direction: column;
  background: #d4d6e8;
}

.scroll-btn {
  height: 16px;
  line-height: 16px;
  text-align: center;
  font-size: 13px;
  color: #111;
  background: #7272ee;
}

.scroll-hatch {
  height: 114px;
  background: repeating-conic-gradient(#2c2c90 0 25%, #8080e4 0 50%) 0 0 / 2px 2px;
}

.scroll-fill {
  flex: 1;
  background: #7272f0;
}

.canvas {
  flex: 1;
  min-width: 0;
  background: linear-gradient(#34346a 0, #36366a 30%, #424272 52%, #6a6a90 78%, #aaabc2 100%);
}

/* the rows run on under the dialog, so stop them just behind its edge */
.tree {
  width: 458px;
  overflow: hidden;
  padding-top: 10px;
  margin-left: -18px;
}

.row {
  position: relative;
  height: 37.270px;
  display: flex;
  align-items: center;
  padding-left: 71px;
  box-sizing: border-box;
  white-space: nowrap;
}

.row.top {
  padding-left: 45px;
}

.row::before {
  content: "";
  position: absolute;
  left: 27px;
  top: 0;
  bottom: 0;
  width: 2px;
  background: #e8e8f2;
}

.row:first-child::before {
  top: -10px;
}

.row.end::before {
  bottom: 50%;
}

.stub {
  position: absolute;
  left: 28px;
  top: 50%;
  width: 17px;
  height: 2px;
  margin-top: -1px;
  background: #e8e8f2;
}

.collapse {
  position: absolute;
  left: 19px;
  top: 50%;
  width: 17px;
  height: 17px;
  margin-top: -9px;
  border-radius: 50%;
  background: linear-gradient(#c8c8c8, #8a8a8a);
  z-index: 1;
}

.collapse::after {
  content: "";
  position: absolute;
  left: 2px;
  right: 2px;
  top: 7px;
  height: 3px;
  background: #111;
}

.link {
  position: absolute;
  left: 53px;
  top: 0;
  bottom: 0;
  width: 2px;
  background: #e8e8f2;
}

.link.last {
  bottom: 50%;
}

.link::after {
  content: "";
  position: absolute;
  left: 0;
  top: 17.600px;
  width: 18px;
  height: 2px;
  background: #e8e8f2;
}

.tree-icon {
  width: 30px;
  height: 30px;
  flex: none;
  position: relative;
  z-index: 1;
}

.fx-icon {
  width: 30px;
  height: 30px;
  flex: none;
  color: #f4f4f8;
  font-family: "Liberation Serif", serif;
  display: flex;
  align-items: center;
  position: relative;
}

.fx-icon b {
  font-style: italic;
  font-weight: 400;
  font-size: 36px;
  line-height: 30px;
  margin-left: 1px;
}

.fx-icon em {
  font-family: "Liberation Sans", sans-serif;
  font-style: normal;
  font-weight: 700;
  font-size: 13px;
  margin: 5px 0 0 -1px;
}

.label {
  margin-left: 4px;
  padding: 0 1px;
  height: 24px;
  line-height: 24px;
  font-size: 17px;
  letter-spacing: 0.15px;
  color: #f4f4fa;
  background: #2f2f62;
  border-radius: 2px;
}

.row.top .label {
  margin-left: 3px;
}

.label.spaced {
  letter-spacing: 0.55px;
}

.label.active {
  text-decoration: underline;
}

/* right strip */
.side-tools {
  width: 38px;
  flex: none;
  display: flex;
  flex-direction: column;
  background: linear-gradient(90deg, #ecedf6, #cfd1e6 45%, #a9aac4);
}

.side-slot {
  position: relative;
  display: flex;
  align-items: center;
  justify-content: center;
  flex: none;
}

.side-icon {
  width: 24px;
  height: 24px;
}

.grip-h {
  width: 16px;
  height: 1px;
  margin-right: 8px;
  background: #fff;
  border-bottom: 1px solid #aaa;
}

.side-sep {
  width: 100%;
  height: 1px;
  background: #fff;
}

.mini-caret {
  position: absolute;
  right: 0;
  bottom: 1px;
  width: 0;
  height: 0;
  border: 4px solid transparent;
  border-bottom: 0;
  border-top-color: #111;
}

/* bottom bar */
.bottom-bar {
  height: 37px;
  box-sizing: border-box;
  padding-top: 6px;
  display: flex;
  align-items: center;
  background: linear-gradient(#fcfcfe 0, #e4e5f1 35%, #bcbdd2 85%, #9a9bb0 100%);
  border-bottom: 1px solid #44465a;
}

.grip-slot {
  width: 18.700px;
  height: 22px;
  position: relative;
  flex: none;
}

.grip-slot::after {
  content: "";
  position: absolute;
  left: 7px;
  top: -2px;
  width: 2px;
  height: 16px;
  background: #c4c4d2;
  border-right: 1px solid #fff;
}

.bottom-bar .grip-slot:first-child {
  width: 13px;
}

.bottom-bar .grip-slot:first-child::after {
  left: 4px;
}

.tool {
  position: relative;
  width: 28.300px;
  height: 30px;
  flex: none;
  display: flex;
  align-items: center;
  justify-content: center;
}

.tool svg {
  width: 24px;
  height: 24px;
}

.tool .mini-caret {
  right: 1px;
  bottom: 0;
}

.scope-box {
  width: 220px;
  height: 25px;
  line-height: 25px;
  margin-left: 2px;
  padding-left: 4px;
  border: 1px solid #888;
  border-radius: 3px;
  box-sizing: border-box;
  flex: none;
  background: linear-gradient(#f8f8fa, #d8d8de);
}

.statusbar {
  height: 25px;
  position: relative;
  display: flex;
  align-items: center;
  justify-content: space-between;
  padding-left: 4px;
  background: #cfd1e6;
  overflow: hidden;
}

.status-right {
  display: flex;
  gap: 2px;
  margin-top: 3px;
}

.cmd-box {
  width: 297px;
  height: 22px;
  background: #fff;
}

.tray {
  width: 33px;
  height: 22px;
  background: #c4c4d2;
  border: 1px solid #e8e8f0;
  box-sizing: border-box;
}

/* floaters */
.floater {
  position: absolute;
  top: 93px;
  height: 70px;
  box-sizing: border-box;
  padding: 0 3px 3px;
  display: flex;
  flex-direction: column;
  background: linear-gradient(90deg, #6e6f94, #8e8fa8 55%, #84859f);
  border: 1px solid #b8b9d0;
  box-shadow: 0 0 5px rgba(0, 0, 0, 0.4);
}

.floater.decor {
  left: 970px;
  width: 231px;
}

.floater.sketchbased {
  left: 1213px;
  width: 314px;
}

.floater-title {
  height: 23px;
  flex: none;
  display: flex;
  align-items: center;
  justify-content: space-between;
  padding: 0 0 1px 3px;
  color: #17172a;
}

.floater-title b {
  width: 16px;
  height: 17px;
  line-height: 15px;
  text-align: center;
  color: #fff;
  font-size: 11px;
  background: #666688;
  border: 1px solid #c4c4d8;
  box-sizing: border-box;
  margin-right: 1px;
}

.floater-body {
  flex: 1;
  display: flex;
  align-items: center;
  padding-left: 6px;
  border: 1px solid #20202e;
  outline: 1px solid #e8e8f2;
  outline-offset: -2px;
  background: linear-gradient(#fdfdff, #e4e4f0 35%, #9b9cb8);
}

.floater-body .grip-v.small {
  margin: -14px 6px 0 0;
  height: 20px;
}

.decor .tool { width: 28.500px; }
.sketchbased .tool { width: 28.800px; }

.compass {
  position: absolute;
  left: 1420px;
  top: 163px;
  width: 91px;
  height: 47px;
}

.axis {
  position: absolute;
  left: 1515px;
  top: 737px;
  width: 44px;
  height: 44px;
}

/* rule editor */
.dialog {
  position: absolute;
  left: 449px;
  top: 240px;
  width: 880px;
  height: 470px;
  box-sizing: border-box;
  display: flex;
  flex-direction: column;
  padding: 0 6px 6px;
  border-radius: 6px 6px 3px 3px;
  background: linear-gradient(#4a4a72, #6c6d8e);
  border: 1px solid #9c9db6;
  box-shadow: 0 0 10px 2px rgba(10, 10, 30, 0.55);
}

.dialog-title {
  height: 27px;
  flex: none;
  display: flex;
  align-items: center;
  justify-content: space-between;
  margin: 0 -6px;
  padding: 0 0 3px 6px;
  box-sizing: border-box;
  background: radial-gradient(ellipse 240px 24px at 110px 12px, #8f8f9c 60%, transparent 100%);
  color: #16161e;
}

.dialog-btns {
  display: flex;
  align-self: flex-start;
  margin-right: 4px;
  height: 18px;
  border: 1px solid #c0c0d0;
  border-top: 0;
  border-radius: 0 0 4px 4px;
  overflow: hidden;
  color: #fff;
  font-weight: 700;
  text-align: center;
  line-height: 17px;
}

.dialog-btns .help {
  width: 27px;
  background: linear-gradient(#9a9aac, #62627e);
}

.dialog-btns .shut {
  width: 49px;
  background: linear-gradient(#dc6a62, #b8382e);
}

.dialog-body {
  position: relative;
  flex: 1;
  min-height: 0;
  box-sizing: border-box;
  padding: 9px 10px 0 10px;
  background: linear-gradient(#ecd9c9, #f1e0c4 45%, #f9e4bd);
  border-top: 1px solid #22223a;
  overflow: hidden;
}

.dlg-toolbar {
  height: 31px;
  display: flex;
  align-items: flex-start;
}

.icon-btn {
  width: 28px;
  height: 29px;
  flex: none;
  display: flex;
  align-items: center;
  justify-content: center;
  background: #ecdccb;
  border: 1px solid;
  border-color: #fff #86807a #86807a #fff;
}

.icon-btn:first-child {
  margin-left: -1px;
}

.icon-btn.thin {
  height: 27px;
  margin-top: 1px;
}

.icon-btn.pressed {
  background: #f6eee4;
  border-color: #86807a #fff #fff #86807a;
}

.icon-btn svg {
  width: 22px;
  height: 22px;
}

.line-label {
  margin-left: auto;
  margin-top: 12px;
  margin-right: 4px;
  letter-spacing: 1px;
}

.line-input {
  width: 50px;
  height: 20px;
  line-height: 18px;
  margin-top: 8px;
  padding-left: 3px;
  box-sizing: border-box;
  background: #fff;
}

.right-btns {
  display: flex;
  margin-left: 17px;
}

.edit-grid {
  height: 158px;
  display: grid;
  grid-template-columns: 614px 231px;
  column-gap: 2px;
}

.editor {
  background: #fff;
  border: 1px solid #9aa6ae;
  border-right-color: #ddd;
  padding: 2px 3px;
  box-sizing: border-box;
  line-height: 17px;
  font-size: 12px;
  letter-spacing: 0.4px;
}

.editor .second {
  margin-top: 1px;
}

.caret-line {
  display: inline-block;
  width: 1px;
  height: 14px;
  vertical-align: -2px;
  background: #111;
}

.formal {
  display: flex;
  flex-direction: column;
  padding-top: 2px;
}

.formal-table {
  height: 83px;
  box-sizing: border-box;
  background: #fff;
  border: 1px solid #888;
  border-top-color: #aaa;
}

.formal-head,
.formal-row {
  display: flex;
  align-items: center;
}

.formal-head {
  height: 23px;
  background: linear-gradient(#fff, #eeeff3);
  border-bottom: 1px solid #d4d8de;
}

.formal-row {
  height: 21px;
}

.c1 {
  width: 61px;
  padding-left: 6px;
  box-sizing: border-box;
}

.c2 {
  width: 37px;
  padding-left: 6px;
  box-sizing: border-box;
}

.formal-head .c1,
.formal-head .c2 {
  height: 100%;
  line-height: 25px;
  border-right: 1px solid #d4d8de;
}

.formal-input {
  height: 20px;
  line-height: 20px;
  margin-top: 2px;
  padding-left: 3px;
  background: #fff;
}

.formal-actions {
  display: flex;
  margin-top: 2px;
  gap: 2px;
  padding-left: 2px;
}

.flat-btn {
  height: 22px;
  box-sizing: border-box;
  background: #c9cbe6;
  border: 1px solid;
  border-color: #e8e8f6 #77798e #77798e #e8e8f6;
}

.new-type {
  width: 73px;
  flex: none;
}

.type-select {
  position: relative;
  width: 152px;
  height: 24px;
  line-height: 23px;
  padding-left: 3px;
  box-sizing: border-box;
  border: 1px solid #8a8a92;
  border-radius: 3px;
  background: linear-gradient(#f6f6f8, #d4d4da);
}

.type-select .caret {
  top: 10px;
  right: 5px;
}

.del {
  width: 38px;
  margin: 3px 0 0 2px;
}

.browser {
  display: grid;
  grid-template-columns: 172px 172px 498px;
  column-gap: 2px;
}

.browser-title {
  height: 20px;
  line-height: 24px;
}

.listbox {
  height: 145px;
  box-sizing: border-box;
  display: flex;
  background: #fff;
  border: 1px solid #777;
  padding: 1px;
}

.list-rows {
  flex: 1;
  min-width: 0;
  overflow: hidden;
}

.list-row {
  height: 17px;
  line-height: 18px;
  padding-left: 2px;
  white-space: nowrap;
  font-size: 12px;
}

.list-row.sel {
  background: #3399ff;
  color: #fff;
}

.vscroll {
  position: relative;
  width: 16px;
  flex: none;
  margin-left: 1px;
  background: #f0f0f0;
}

.vscroll .up,
.vscroll .down {
  position: absolute;
  left: 4px;
  width: 0;
  height: 0;
  border: 4px solid transparent;
}

.vscroll .up {
  top: 5px;
  border-top: 0;
  border-bottom-color: #444;
}

.vscroll .down {
  bottom: 5px;
  border-bottom: 0;
  border-top-color: #444;
}

.thumb {
  position: absolute;
  left: 0;
  right: 0;
  top: 18px;
  box-sizing: border-box;
  display: flex;
  align-items: center;
  justify-content: center;
  border: 1px solid #999;
  border-radius: 2px;
  background: linear-gradient(90deg, #f4f4f4, #cfcfcf);
}

.thumb b {
  width: 7px;
  height: 7px;
  background: repeating-linear-gradient(#555 0 1px, transparent 1px 3px);
}

.msg-fields {
  display: flex;
  gap: 5px;
  margin-top: 5px;
  padding-left: 2px;
}

.msg {
  height: 20px;
  background: #efefef;
  border: 1px solid #fff;
  box-sizing: border-box;
}

.msg.wide { width: 434px; }
.msg.narrow { width: 158px; }

.actions {
  display: flex;
  justify-content: flex-end;
  gap: 7px;
  margin-top: 14px;
  margin-right: -2px;
}

.action {
  width: 54px;
  height: 22px;
  display: flex;
  align-items: center;
  justify-content: center;
  gap: 3px;
  background: #cbcde6;
  border: 1px solid;
  border-color: #ecedf8 #77798e #77798e #ecedf8;
  font-size: 13px;
}

.dot {
  width: 13px;
  height: 13px;
  border-radius: 50%;
}

.dot.green { background: radial-gradient(circle at 40% 35%, #70e070, #0c8c18 70%); }
.dot.teal { background: radial-gradient(circle at 40% 35%, #a0c8b8, #1a4a3c 70%); }
.dot.red { background: radial-gradient(circle at 40% 35%, #f8a090, #c01818 70%); }

.planet {
  position: absolute;
  left: -14px;
  bottom: -30px;
  width: 60px;
  height: 54px;
  border-radius: 50%;
  filter: blur(2px);
  background: radial-gradient(circle at 40% 60%, #3f6880 44%, #8d8f8a 62%, #f0b060 72%, rgba(248, 228, 189, 0) 100%);
}

/* pointer highlight */
.spot {
  position: absolute;
  left: 667px;
  top: 297px;
  width: 58px;
  height: 58px;
  border-radius: 50%;
  background: #f3ee02;
}

.ibeam {
  position: absolute;
  left: 694px;
  top: 317px;
  width: 10px;
  height: 20px;
}

/* network widget */
.netmon {
  position: absolute;
  left: 1480px;
  top: 794px;
  width: 120px;
  height: 60px;
}

.net-rates {
  position: absolute;
  left: 0;
  top: 9px;
  width: 100px;
  height: 42px;
  border-radius: 21px;
  background: #2c3236;
  color: #aeb4b8;
  font-size: 11px;
  padding-left: 14px;
  box-sizing: border-box;
}

.net-rates div {
  position: relative;
  height: 21px;
  line-height: 21px;
  padding-left: 19px;
}

.net-rates b {
  font-weight: 400;
  color: #d8d8d8;
  font-size: 12px;
  margin-right: 1px;
}

.net-rates small {
  font-size: 10px;
}

.net-up,
.net-down {
  position: absolute;
  left: 0;
  top: 7px;
  width: 0;
  height: 0;
  border: 4px solid transparent;
}

.net-up {
  border-top: 0;
  border-bottom: 6px solid #5ac8e8;
}

.net-down {
  border-bottom: 0;
  border-top: 6px solid #4cc060;
}

.net-gauge {
  position: absolute;
  left: 59px;
  top: 0;
  width: 60px;
  height: 60px;
}

.net-gauge svg {
  width: 60px;
  height: 60px;
}

.net-value {
  position: absolute;
  left: 11px;
  top: 16px;
  font-size: 26px;
  line-height: 28px;
  color: #e8ecec;
}

.net-value small {
  font-size: 10px;
}
</style>
